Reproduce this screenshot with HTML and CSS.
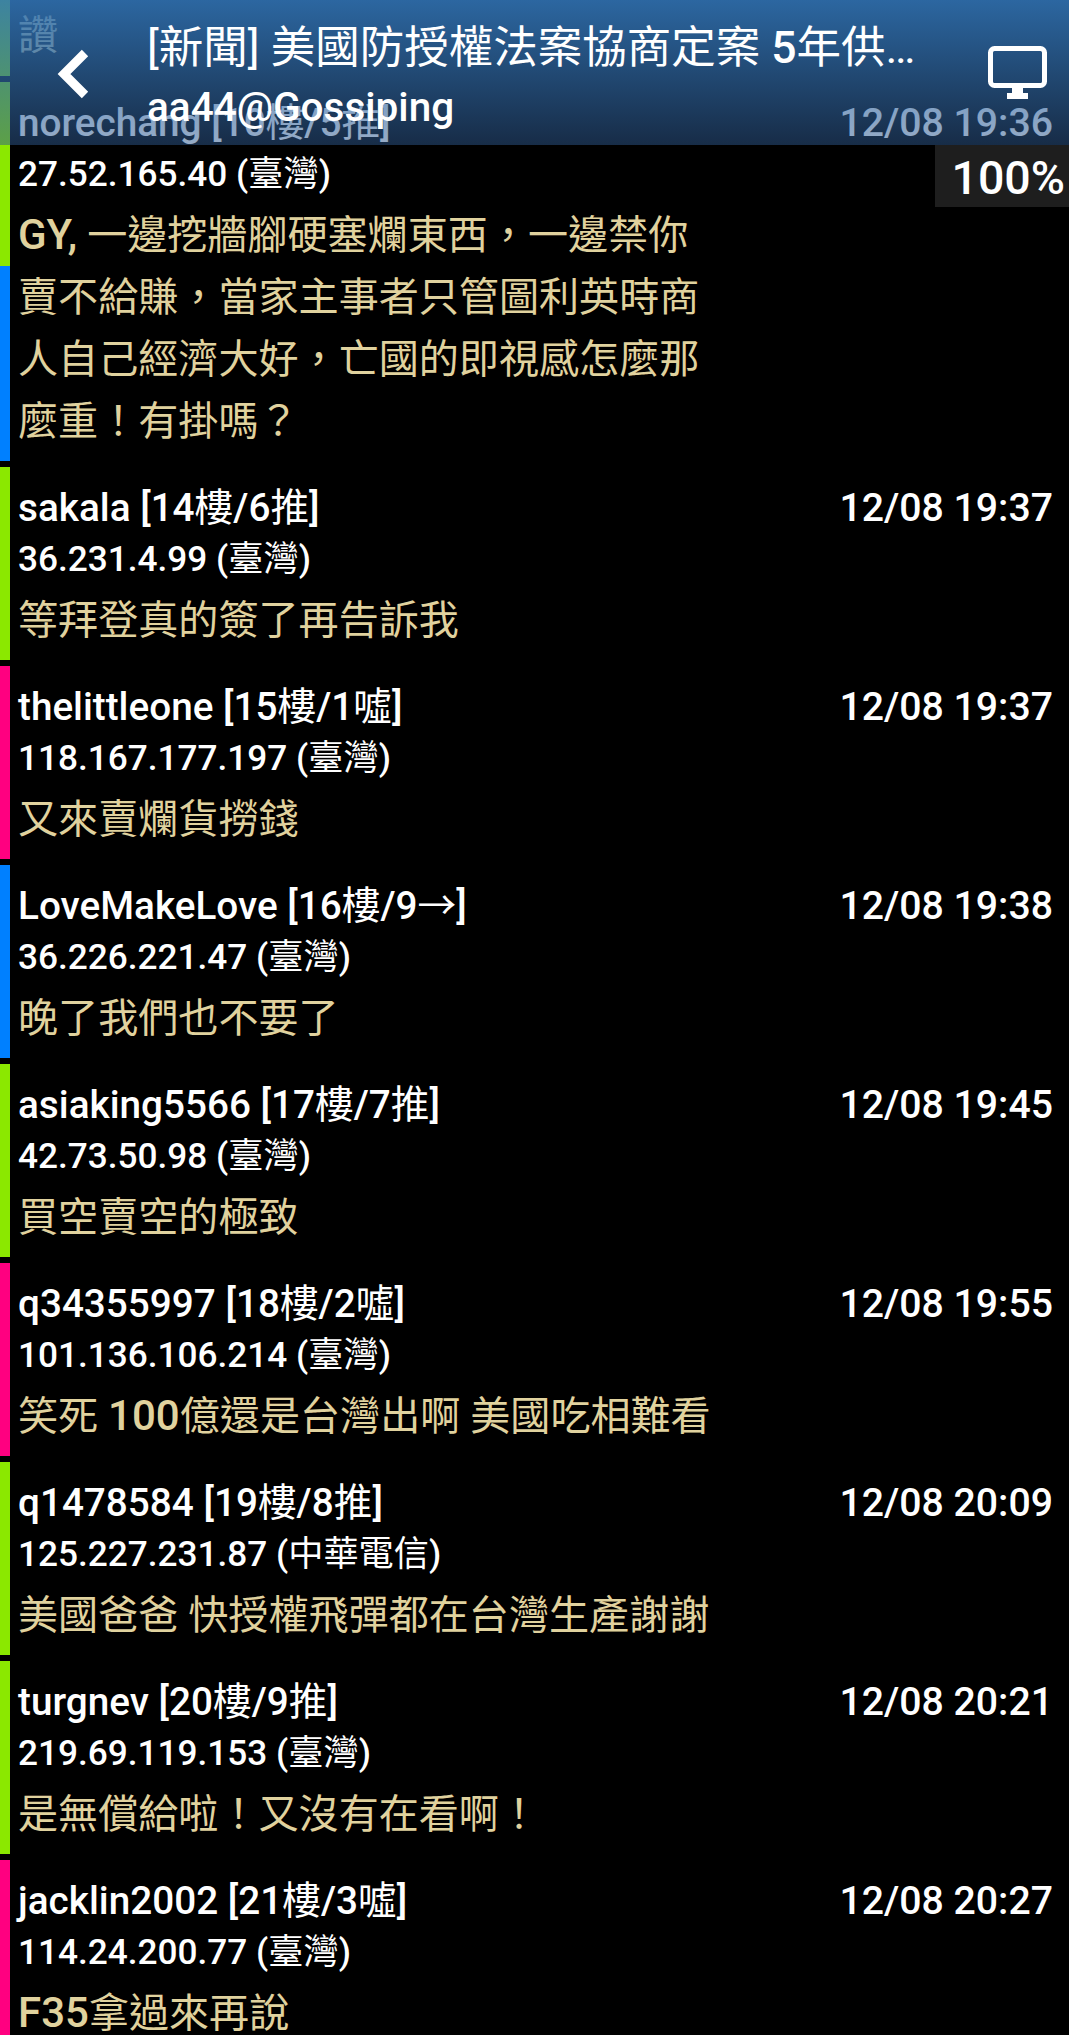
FILE: index.html
```html
<!DOCTYPE html>
<html lang="zh-Hant">

<head>
  <meta charset="UTF-8">
  <meta name="viewport" content="width=device-width, initial-scale=1.0">
  <title>aa44@Gossiping</title>
  <link rel="stylesheet" href="styles.css">
</head>

<body>
  <div id="container">
    <div id="list">
      <div class="row row-top green">
        <p class="text">讚</p>
      </div>

      <div class="row split">
        <div class="head"><span class="name">norechang [10<i>樓</i>/5<i>推</i>]</span><span class="date">12/08 19:36</span></div>
        <div class="ip">27.52.165.40 (<i>臺灣</i>)</div>
        <p class="text"><b>GY,</b> 一邊挖牆腳硬塞爛東西，一邊禁你<br>賣不給賺，當家主事者只管圖利英時商<br>人自己經濟大好，亡國的即視感怎麼那<br>麼重！有掛嗎？</p>
      </div>

      <div class="row green">
        <div class="head"><span class="name">sakala [14<i>樓</i>/6<i>推</i>]</span><span class="date">12/08 19:37</span></div>
        <div class="ip">36.231.4.99 (<i>臺灣</i>)</div>
        <p class="text">等拜登真的簽了再告訴我</p>
      </div>

      <div class="row pink">
        <div class="head"><span class="name">thelittleone [15<i>樓</i>/1<i>噓</i>]</span><span class="date">12/08 19:37</span></div>
        <div class="ip">118.167.177.197 (<i>臺灣</i>)</div>
        <p class="text">又來賣爛貨撈錢</p>
      </div>

      <div class="row blue">
        <div class="head"><span class="name">LoveMakeLove [16<i>樓</i>/9<i>→</i>]</span><span class="date">12/08 19:38</span></div>
        <div class="ip">36.226.221.47 (<i>臺灣</i>)</div>
        <p class="text">晚了我們也不要了</p>
      </div>

      <div class="row green">
        <div class="head"><span class="name">asiaking5566 [17<i>樓</i>/7<i>推</i>]</span><span class="date">12/08 19:45</span></div>
        <div class="ip">42.73.50.98 (<i>臺灣</i>)</div>
        <p class="text">買空賣空的極致</p>
      </div>

      <div class="row pink">
        <div class="head"><span class="name">q34355997 [18<i>樓</i>/2<i>噓</i>]</span><span class="date">12/08 19:55</span></div>
        <div class="ip">101.136.106.214 (<i>臺灣</i>)</div>
        <p class="text">笑死 <b>100</b>億還是台灣出啊 美國吃相難看</p>
      </div>

      <div class="row green">
        <div class="head"><span class="name">q1478584 [19<i>樓</i>/8<i>推</i>]</span><span class="date">12/08 20:09</span></div>
        <div class="ip">125.227.231.87 (<i>中華電信</i>)</div>
        <p class="text">美國爸爸 快授權飛彈都在台灣生產謝謝</p>
      </div>

      <div class="row green">
        <div class="head"><span class="name">turgnev [20<i>樓</i>/9<i>推</i>]</span><span class="date">12/08 20:21</span></div>
        <div class="ip">219.69.119.153 (<i>臺灣</i>)</div>
        <p class="text">是無償給啦！又沒有在看啊！</p>
      </div>

      <div class="row pink">
        <div class="head"><span class="name">jacklin2002 [21<i>樓</i>/3<i>噓</i>]</span><span class="date">12/08 20:27</span></div>
        <div class="ip">114.24.200.77 (<i>臺灣</i>)</div>
        <p class="text"><b>F35</b>拿過來再說</p>
      </div>
    </div>

    <div id="topBar">
      <svg class="back" width="34" height="50" viewBox="0 0 34 50">
        <path d="M28 4 L7 25 L28 46" fill="none" stroke="#fff" stroke-width="9" />
      </svg>
      <div class="titles">
        <div class="title">[新聞] 美國防授權法案協商定案 <b>5</b>年供…</div>
        <div class="board">aa44@Gossiping</div>
      </div>
      <svg class="screen" width="60" height="54" viewBox="0 0 60 54">
        <rect x="2.5" y="2.5" width="54" height="37" rx="4" fill="none" stroke="#fff" stroke-width="5" />
        <path d="M24 41 H35 V47 H40 V53 H19 V47 H24 Z" fill="#fff" />
      </svg>
    </div>

    <div id="zoomBox">100%</div>
  </div>
</body>

</html>
```

FILE: styles.css
```css
* {
  margin: 0;
  padding: 0;
  box-sizing: border-box;
}

html,
body {
  height: 100%;
  overflow: hidden;
  background-color: black;
}

body {
  font-family: Roboto, "Noto Sans CJK TC", sans-serif;
  color: white;
}

b {
  font-weight: 500;
}

/* 英數字用 500，中文維持細一點 */
i {
  font-style: normal;
  font-weight: 400;
}

#container {
  position: relative;
  height: 2035px;
  overflow: hidden;
}

/* 留言列表 */
#list {
  display: flex;
  flex-direction: column;
  gap: 6px;
}

.row {
  padding: 16px 16px 8px 18px;
  background-repeat: no-repeat;
  background-size: 10px 100%;
}

.row-top {
  padding-top: 5px;
  padding-bottom: 9px;
}

.green {
  background-image: linear-gradient(#8be800, #8be800);
}

.pink {
  background-image: linear-gradient(#ff0080, #ff0080);
}

.blue {
  background-image: linear-gradient(#0080ff, #0080ff);
}

/* 這一列的色條上下兩段不同色 */
.split {
  background-image: linear-gradient(#8be800 184px, #0080ff 184px);
}

.head {
  display: flex;
  justify-content: space-between;
  height: 50px;
  font-size: 38.7px;
  font-weight: 500;
  line-height: 50px;
}

.date {
  font-size: 39.2px;
}

.ip {
  height: 50px;
  padding-top: 1px;
  font-size: 35.2px;
  font-weight: 500;
  line-height: 50px;
}

.text {
  margin-top: 7px;
  height: auto;
  font-size: 40.1px;
  line-height: 62px;
  color: #e0d29e;
}

.text b {
  font-size: 42px;
  line-height: 1;
}

.row-top .text {
  margin-top: 0;
}

/* 上方標題列 */
#topBar {
  position: absolute;
  top: 0;
  left: 0;
  width: 100%;
  height: 145px;
  display: flex;
  align-items: flex-start;
  background: linear-gradient(rgba(50, 117, 183, 0.88), rgba(46, 88, 142, 0.5));
}

.back {
  margin: 49px 0 0 57px;
  flex: none;
}

.titles {
  flex: 1;
  margin-left: 56px;
  min-width: 0;
}

.title {
  height: 60px;
  margin-top: 18px;
  font-size: 44.5px;
  line-height: 60px;
  white-space: nowrap;
}

.board {
  height: 58px;
  font-size: 40.5px;
  font-weight: 500;
  line-height: 58px;
}

.screen {
  margin: 46px 21px 0 0;
  flex: none;
}

#zoomBox {
  position: absolute;
  top: 145px;
  right: 0;
  width: 134px;
  height: 62px;
  padding: 2px 4px 0 0;
  font-size: 46.5px;
  font-weight: 500;
  line-height: 62px;
  text-align: right;
  background-color: #1e1e1e;
}
```
